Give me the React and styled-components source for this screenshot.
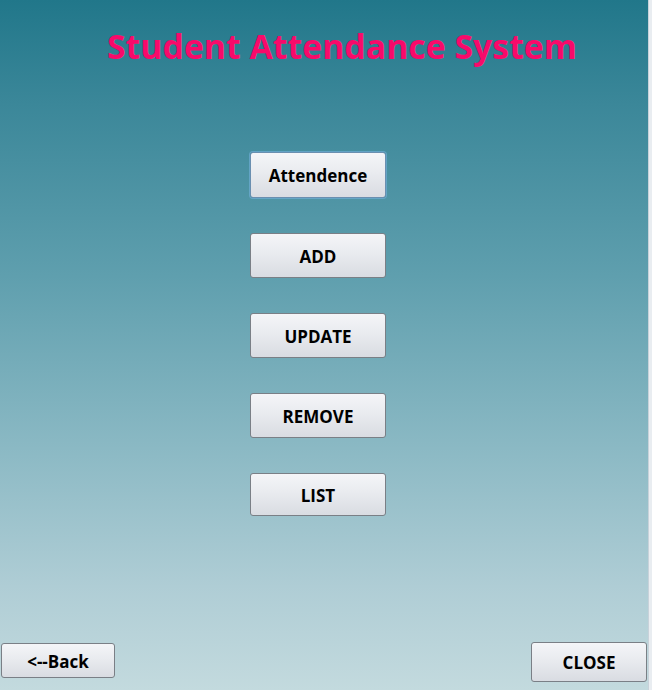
import React from "react";
import styled, { createGlobalStyle } from "styled-components";

const Global = createGlobalStyle`
  html, body { margin: 0; padding: 0; background: #eef1f4; }
  body { font-family: "Open Sans", "Noto Sans", sans-serif; }
  #root { width: 652px; height: 690px; }
`;

const Frame = styled.div`
  display: flex;
  width: 652px;
  height: 690px;
  overflow: hidden;
`;

const Panel = styled.div`
  width: 648px;
  height: 690px;
  display: flex;
  flex-direction: column;
  background: linear-gradient(
    180deg,
    #21778a 0%,
    #3b8799 15%,
    #5f9fae 40%,
    #8bb9c4 65%,
    #afcdd5 85%,
    #c3dade 100%
  );
`;

const Strip = styled.div`
  width: 4px;
  height: 690px;
  background: #e9edf1;
  border-left: 1px solid #c8d2da;
  box-sizing: border-box;
`;

const Title = styled.h1`
  margin: 21px 0 0 107px;
  font-family: "Open Sans", "Noto Sans", sans-serif;
  font-weight: 700;
  font-size: 33.8px;
  line-height: 50px;
  color: #f80a6a;
  letter-spacing: 0;
  white-space: nowrap;
`;

const Menu = styled.div`
  display: flex;
  flex-direction: column;
  gap: 35px;
  margin: 81px 0 0 250px;
  width: 136px;
`;

const Button = styled.button`
  box-sizing: border-box;
  width: ${(p) => p.$w || 136}px;
  height: ${(p) => p.$h || 45}px;
  padding: 1px 0 0 0;
  border: 1px solid ${(p) => (p.$focus ? "#6a8fb0" : "#7a7f86")};
  border-radius: 3px;
  background: linear-gradient(180deg, #f4f5f8 0%, #e9ebef 45%, #d9dce2 100%);
  box-shadow: ${(p) =>
    p.$focus ? "0 0 0 1px rgba(120,180,225,0.55)" : "none"};
  font-family: "Open Sans", "Noto Sans", sans-serif;
  font-weight: 700;
  font-size: ${(p) => p.$fs || 17}px;
  color: #000;
  cursor: pointer;
`;

const Bottom = styled.div`
  margin-top: auto;
  display: flex;
  justify-content: space-between;
  align-items: flex-start;
  padding: 0 1px 8px 1px;
`;

const BackBtn = styled(Button)`
  margin-top: 1px;
`;

export default function App() {
  return (
    <>
      <Global />
      <Frame>
        <Panel>
          <Title>Student Attendance System</Title>
          <Menu>
            <Button $focus $h={46}>Attendence</Button>
            <Button>ADD</Button>
            <Button>UPDATE</Button>
            <Button>REMOVE</Button>
            <Button $h={43}>LIST</Button>
          </Menu>
          <Bottom>
            <BackBtn $w={114} $h={35}>&lt;--Back</BackBtn>
            <Button $w={116} $h={40}>CLOSE</Button>
          </Bottom>
        </Panel>
        <Strip />
      </Frame>
    </>
  );
}
